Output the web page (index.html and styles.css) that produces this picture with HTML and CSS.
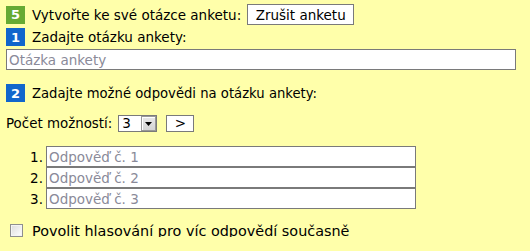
FILE: index.html
```html
<!DOCTYPE html>
<html lang="cs">
<head>
<meta charset="utf-8">
<link rel="stylesheet" href="styles.css">
</head>
<body>
<div class="poll">
  <div class="row head1">
    <span class="badge green">5</span>
    <span class="label">Vytvořte ke své otázce anketu:</span>
    <button class="btn cancel">Zrušit anketu</button>
  </div>
  <div class="row head2">
    <span class="badge blue">1</span>
    <span class="label">Zadajte otázku ankety:</span>
  </div>
  <input class="field question" type="text" placeholder="Otázka ankety">
  <div class="row head3">
    <span class="badge blue">2</span>
    <span class="label">Zadajte možné odpovědi na otázku ankety:</span>
  </div>
  <div class="row count">
    <span class="label">Počet možností:</span>
    <div class="select">
      <span class="select-value">3</span>
      <span class="select-arrow"><svg width="7" height="4" viewBox="0 0 7 4"><path d="M0 0h7L3.5 4z" fill="#000"/></svg></span>
    </div>
    <button class="btn go">&gt;</button>
  </div>
  <ol class="answers">
    <li><span class="num">1.</span><input class="field answer" type="text" placeholder="Odpověď č. 1"></li>
    <li><span class="num">2.</span><input class="field answer" type="text" placeholder="Odpověď č. 2"></li>
    <li><span class="num">3.</span><input class="field answer" type="text" placeholder="Odpověď č. 3"></li>
  </ol>
  <label class="row multi">
    <span class="check"></span>
    <span class="label">Povolit hlasování pro víc odpovědí současně</span>
  </label>
</div>
</body>
</html>
```
FILE: styles.css
```css
html, body {
  margin: 0;
  padding: 0;
  background: #ffffaa;
}
body {
  font-family: "DejaVu Sans", Verdana, sans-serif;
  font-size: 13px;
  color: #000;
}
.poll {
  padding: 4px 6px 0 6px;
  display: flex;
  flex-direction: column;
}
.row {
  display: flex;
  align-items: center;
}
.badge {
  width: 19px;
  height: 18px;
  display: flex;
  align-items: center;
  justify-content: center;
  color: #fff;
  font-weight: bold;
  font-size: 13px;
  margin-right: 7px;
}
.green { background: #66aa33; }
.blue { background: #1166cc; }
.head1 { height: 21px; }
.head1 .label { font-size: 13.5px; }
.btn {
  font-family: inherit;
  font-size: 13.5px;
  background: #fff;
  border: 1px solid #7a7a7a;
  padding: 0;
  color: #000;
}
.cancel {
  margin-left: 6px;
  width: 107px;
  height: 21px;
}
.head2 { margin-top: 3px; height: 18px; }
.head2 .label { font-size: 13.5px; }
.field {
  box-sizing: border-box;
  height: 21px;
  border: 1px solid #7a7a7a;
  background: #fff;
  font-family: inherit;
  font-size: 13.5px;
  padding: 0 2px;
  margin: 0;
  outline: none;
}
.field::placeholder { color: #8a8a99; }
.question {
  margin-top: 3px;
  width: 510px;
}
.head3 { margin-top: 14px; height: 18px; }
.head3 .label { font-size: 13.2px; }
.count { margin-top: 13px; height: 17px; }
.count .label { font-size: 13.4px; }
.select {
  margin-left: 6px;
  box-sizing: border-box;
  width: 39px;
  height: 17px;
  border: 1px solid #7a7a7a;
  background: #fff;
  display: flex;
  font-size: 13.5px;
}
.select-value {
  flex: 1;
  padding-left: 3px;
  line-height: 15px;
}
.select-arrow {
  box-sizing: border-box;
  width: 15px;
  height: 15px;
  background: linear-gradient(#e8e8e8, #d4d4d4);
  border: 1px solid #999;
  box-shadow: inset 1px 1px 0 #fff;
  display: flex;
  align-items: center;
  justify-content: center;
}
.go {
  margin-left: 9px;
  width: 28px;
  height: 17px;
  line-height: 15px;
}
.answers {
  list-style: none;
  margin: 14px 0 0 0;
  padding: 0;
  display: flex;
  flex-direction: column;
}
.answers li {
  display: flex;
  align-items: center;
}
.num {
  width: 37px;
  text-align: right;
  padding-right: 3px;
  font-size: 13.5px;
}
.answer { width: 370px; }
.multi { margin-top: 15px; height: 13px; }
.multi .label { font-size: 14.4px; }
.check {
  box-sizing: border-box;
  width: 13px;
  height: 13px;
  margin-left: 4px;
  margin-right: 9px;
  border: 1px solid #8e8f8f;
  background: linear-gradient(135deg, #dcdcdc 0%, #ffffff 100%);
  box-shadow: inset 0 0 0 1px #f4f4f4;
}
```
